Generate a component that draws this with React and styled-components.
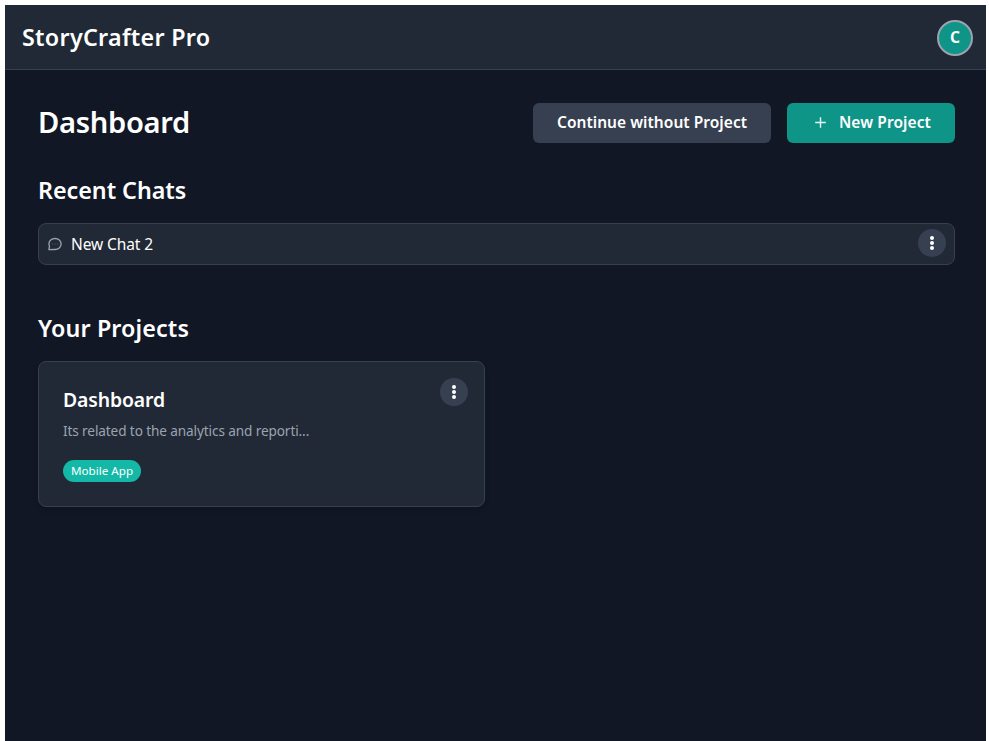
import React from "react";
import styled, { createGlobalStyle } from "styled-components";

const GlobalStyle = createGlobalStyle`
  *, *::before, *::after { box-sizing: border-box; }
  body {
    margin: 0;
    background: #fff;
    font-family: "Noto Sans", sans-serif;
    color: #fff;
  }
  h1, h2, h3, p { margin: 0; }
  button { font: inherit; color: inherit; border: 0; cursor: pointer; }
`;

const Shell = styled.div`
  height: 100vh;
  padding: 5px 3px 0 5px;
  display: flex;
  flex-direction: column;
  overflow: hidden;
`;

const Header = styled.header`
  height: 65px;
  flex: none;
  display: flex;
  align-items: center;
  justify-content: space-between;
  padding: 1px 13px 0 17px;
  background: #212936;
  border-bottom: 1px solid #374050;
`;

const Brand = styled.span`
  padding-bottom: 2px;
  font-size: 23.3px;
  font-weight: 600;
  line-height: 32px;
  letter-spacing: 0.28px;
`;

const Avatar = styled.button`
  width: 36px;
  height: 36px;
  padding: 0 0 1px;
  display: flex;
  align-items: center;
  justify-content: center;
  border: 2px solid #9ca3af;
  border-radius: 50%;
  background: #0f9488;
  font-size: 15.5px;
  font-weight: 700;
`;

const Main = styled.main`
  flex: 1;
  padding: 33px 31px 0 33px;
  background: #111725;
`;

const TitleBar = styled.div`
  height: 40px;
  display: flex;
  align-items: center;
  justify-content: space-between;
`;

const PageTitle = styled.h1`
  padding-bottom: 2px;
  font-size: 29.1px;
  font-weight: 600;
  line-height: 36px;
  letter-spacing: -0.3px;
`;

const Actions = styled.div`
  display: flex;
  gap: 16px;
`;

const ActionButton = styled.button`
  width: ${(p) => p.$width}px;
  height: 40px;
  padding: 0 24px 2px;
  display: flex;
  align-items: center;
  justify-content: ${(p) => (p.$primary ? "flex-end" : "center")};
  gap: 12px;
  border-radius: 6px;
  background: ${(p) => (p.$primary ? "#0f9488" : "#374050")};
  font-size: 15.5px;
  font-weight: 600;
  letter-spacing: ${(p) => (p.$primary ? 0.1 : 0.04)}px;
  white-space: nowrap;
`;

const Section = styled.section`
  margin-top: ${(p) => p.$gap}px;
`;

const SectionTitle = styled.h2`
  margin-bottom: 17px;
  font-size: 23.3px;
  font-weight: 600;
  line-height: 32px;
  letter-spacing: ${(p) => p.$tracking}px;
`;

const ChatRow = styled.div`
  height: 42px;
  padding: 0 8px 0 9px;
  display: flex;
  align-items: center;
  gap: 9px;
  border: 1px solid #374050;
  border-radius: 8px;
  background: #212936;
`;

const ChatName = styled.span`
  flex: 1;
  padding-bottom: 1px;
  font-size: 15.5px;
  line-height: 24px;
  letter-spacing: -0.1px;
`;

const MenuButton = styled.button`
  width: 28px;
  height: 28px;
  flex: none;
  padding: 0;
  margin-bottom: 2px;
  display: flex;
  align-items: center;
  justify-content: center;
  border-radius: 50%;
  background: #374050;
`;

const ProjectGrid = styled.div`
  display: grid;
  grid-template-columns: 447px 1fr;
`;

const ProjectCard = styled.article`
  height: 146px;
  padding: 16px 16px 24px 24px;
  display: flex;
  align-items: flex-start;
  justify-content: space-between;
  border: 1px solid #374050;
  border-radius: 8px;
  background: #212936;
  box-shadow: 0 4px 6px -1px rgba(0, 0, 0, 0.1), 0 2px 4px -1px rgba(0, 0, 0, 0.06);
`;

const ProjectInfo = styled.div`
  padding-top: 8px;
  display: flex;
  flex-direction: column;
  align-items: flex-start;
`;

const ProjectName = styled.h3`
  font-size: 19.4px;
  font-weight: 600;
  line-height: 28px;
  letter-spacing: -0.12px;
`;

const ProjectSummary = styled.p`
  margin-top: 7px;
  color: #9ca3af;
  font-size: 13.6px;
  line-height: 20px;
  letter-spacing: -0.11px;
`;

const Badge = styled.span`
  margin-top: 19px;
  width: 78px;
  height: 22px;
  display: flex;
  align-items: center;
  justify-content: center;
  border-radius: 11px;
  background: #14b8a6;
  font-size: 11.65px;
  line-height: 16px;
`;

const PlusIcon = () => (
  <svg width="12" height="12" viewBox="0 0 12 12" fill="none" stroke="#e5f5f3" strokeWidth="1.4" aria-hidden="true">
    <path d="M5.5 1.2v10.6M.2 6.5h10.6" />
  </svg>
);

const ChatIcon = () => (
  <svg width="14" height="14" viewBox="0 0 14 14" fill="none" stroke="#9ca3af" strokeWidth="1.3" strokeLinejoin="round" aria-hidden="true">
    <path d="M.9 12.7 1.5 9.2A5.6 5.6 0 0 1 .9 7C.9 3.9 3.6 1.5 7 1.5s6.1 2.4 6.1 5.5-2.7 5.5-6.1 5.5Z" />
    <path d="M3.9 7h1M6.5 7h1M9.1 7h1" strokeWidth="1" opacity=".45" />
  </svg>
);

const DotsIcon = () => (
  <svg width="4" height="14" viewBox="0 0 4 14" fill="#fff" aria-hidden="true">
    <circle cx="2" cy="2" r="2" />
    <circle cx="2" cy="7" r="2" />
    <circle cx="2" cy="12" r="2" />
  </svg>
);

export default function App() {
  return (
    <Shell>
      <GlobalStyle />
      <Header>
        <Brand>StoryCrafter Pro</Brand>
        <Avatar aria-label="Account">C</Avatar>
      </Header>
      <Main>
        <TitleBar>
          <PageTitle>Dashboard</PageTitle>
          <Actions>
            <ActionButton $width={238}>Continue without Project</ActionButton>
            <ActionButton $width={168} $primary>
              <PlusIcon />
              New Project
            </ActionButton>
          </Actions>
        </TitleBar>
        <Section $gap={31}>
          <SectionTitle $tracking={-0.03}>Recent Chats</SectionTitle>
          <ChatRow>
            <ChatIcon />
            <ChatName>New Chat 2</ChatName>
            <MenuButton aria-label="Chat menu"><DotsIcon /></MenuButton>
          </ChatRow>
        </Section>
        <Section $gap={47}>
          <SectionTitle $tracking={0.12}>Your Projects</SectionTitle>
          <ProjectGrid>
            <ProjectCard>
              <ProjectInfo>
                <ProjectName>Dashboard</ProjectName>
                <ProjectSummary>Its related to the analytics and reporti...</ProjectSummary>
                <Badge>Mobile App</Badge>
              </ProjectInfo>
              <MenuButton aria-label="Project menu"><DotsIcon /></MenuButton>
            </ProjectCard>
          </ProjectGrid>
        </Section>
      </Main>
    </Shell>
  );
}
